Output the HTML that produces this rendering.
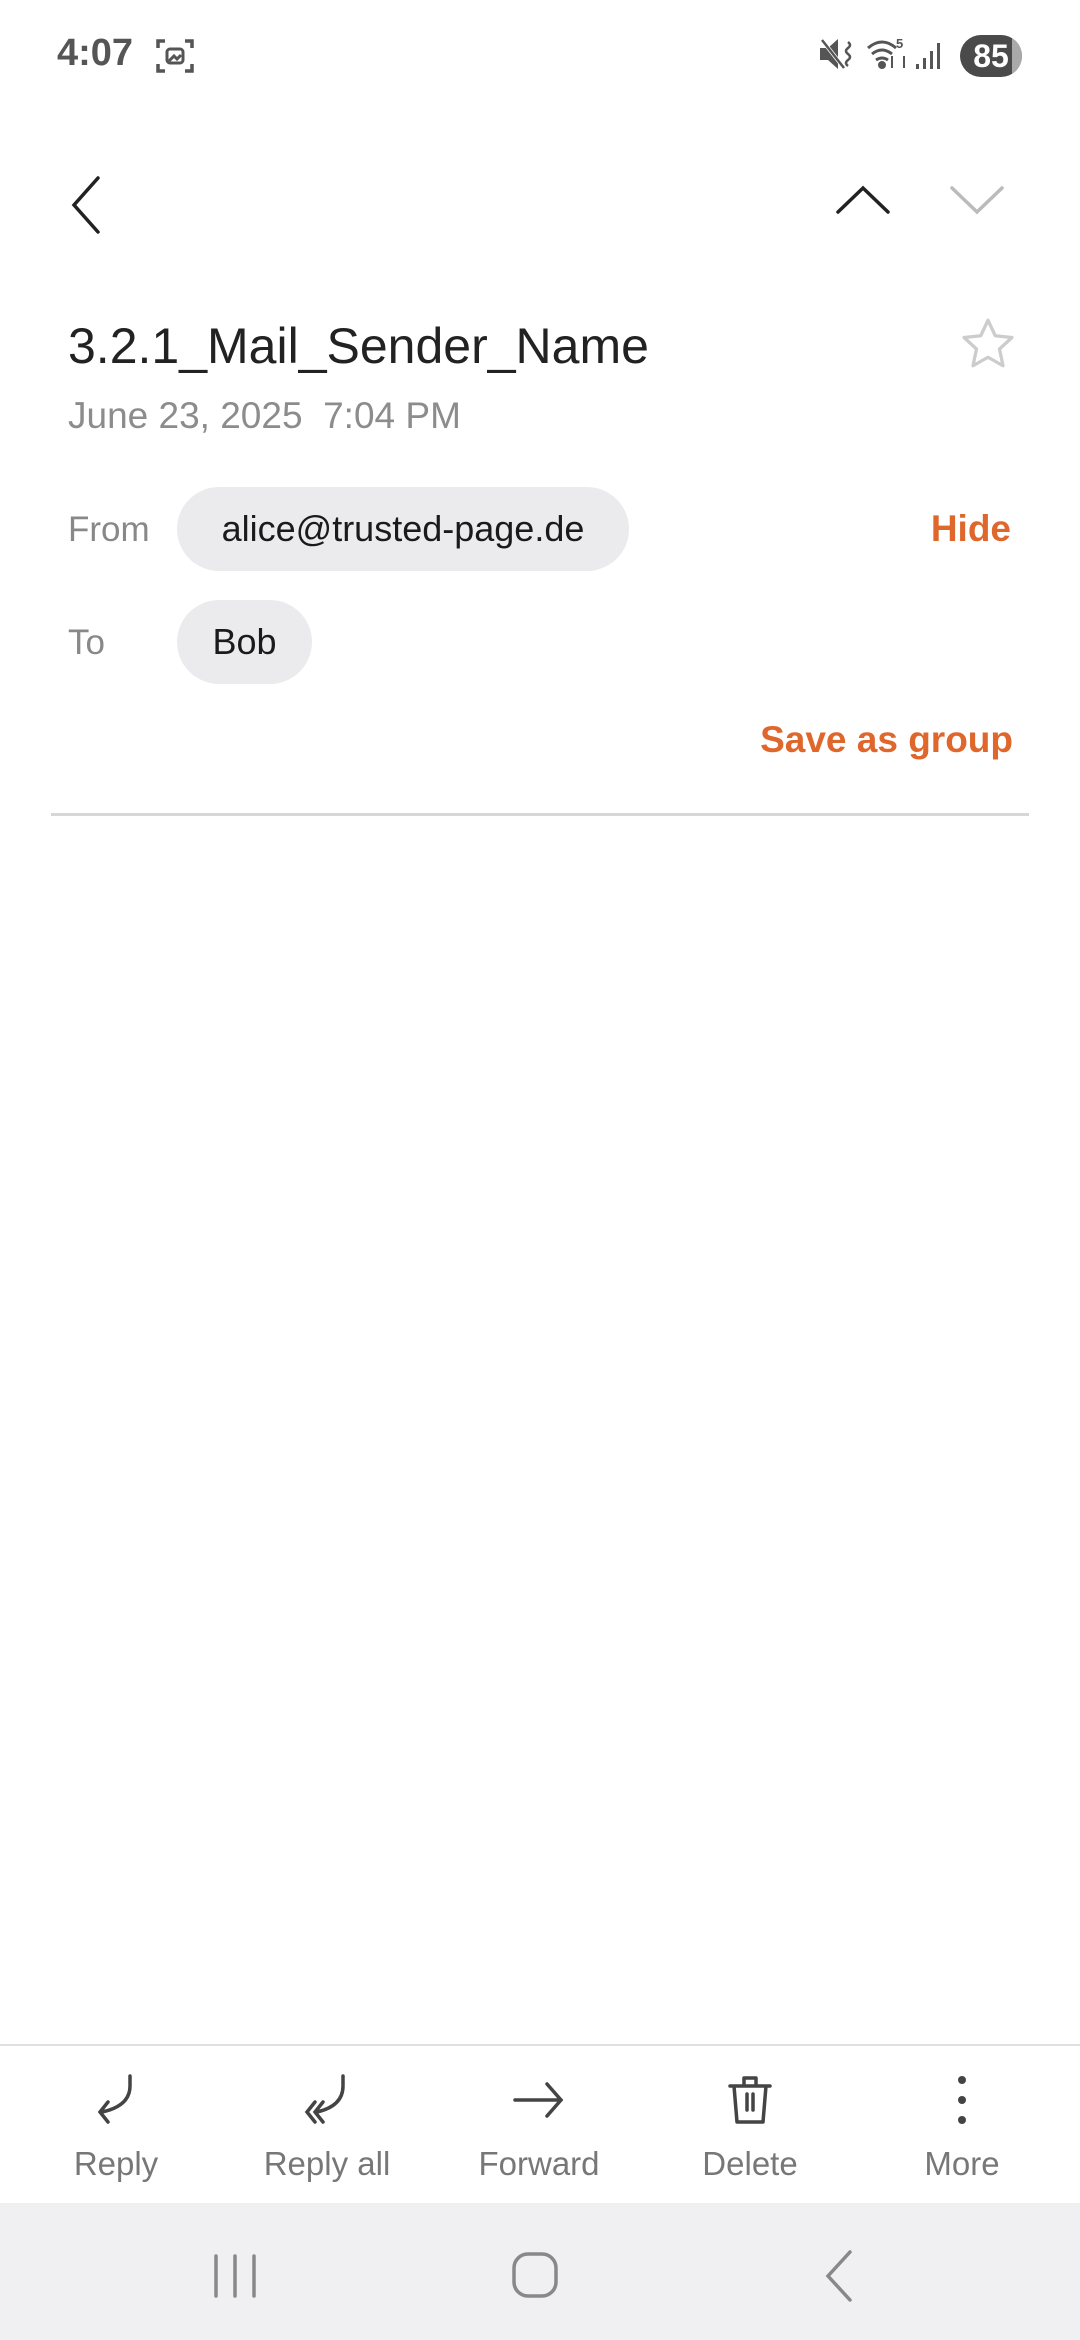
<!DOCTYPE html>
<html><head><meta charset="utf-8"><style>
*{margin:0;padding:0;box-sizing:border-box}
body{width:1080px;height:2340px;background:#fff;font-family:"Liberation Sans",sans-serif;position:relative;overflow:hidden}
.a{position:absolute}
.chip{position:absolute;background:#ebebed;border-radius:42px;height:84px;font-size:36px;color:#1a1a1a;line-height:84px;padding:0 36px}
.lbl{position:absolute;font-size:35px;color:#888}
.tab{position:absolute;top:2072px;width:200px;text-align:center}
.tab span{display:block;margin-top:12px;font-size:33px;color:#777}
</style></head><body>
<div class="a" style="left:57px;top:32px;font-size:38px;font-weight:bold;color:#555">4:07</div>
<svg class="a" style="left:155px;top:37px" width="40" height="38" viewBox="0 0 40 38" fill="none" stroke="#555" stroke-width="3.5"><path d="M3 11V4h7M30 4h7v7M37 27v7h-7M10 34H3v-7"/><rect x="12" y="12" width="16" height="14" rx="3" stroke-width="3"/><path d="M14 24l5-5 3 3 4-4" stroke-width="3"/></svg>
<svg class="a" style="left:818px;top:36px" width="40" height="36" viewBox="0 0 40 36"><path d="M2 12h8l10-9v30l-10-9H2z" fill="#555"/><path d="M4 4l22 28" stroke="#fff" stroke-width="4"/><path d="M4 4l22 28" stroke="#555" stroke-width="2.5"/><path d="M30 6q4 3 0 6q-4 3 0 6q4 3 0 6q-4 3 0 6" stroke="#555" stroke-width="2.5" fill="none"/></svg>
<svg class="a" style="left:866px;top:36px" width="44" height="36" viewBox="0 0 44 36" fill="none" stroke="#555" stroke-width="3"><path d="M2 12q14-12 28 0M6 18q10-8 20 0M10 24q6-4 12 0"/><circle cx="16" cy="29" r="2.5" fill="#555"/><text x="30" y="12" font-size="13" fill="#555" stroke="none" font-weight="bold">5</text><path d="M26 20v12M38 32V20" stroke-width="2"/></svg>
<svg class="a" style="left:914px;top:40px" width="30" height="30" viewBox="0 0 30 30" fill="#555"><rect x="2" y="24" width="3" height="5"/><rect x="9" y="18" width="3" height="11"/><rect x="16" y="11" width="3" height="18"/><rect x="23" y="3" width="3" height="26"/></svg>
<div class="a" style="left:960px;top:35px;width:62px;height:42px;border-radius:21px;background:#4a4a4a;color:#fff;font-weight:bold;font-size:32px;text-align:center;line-height:42px;overflow:hidden"><div class="a" style="right:0;top:0;width:10px;height:42px;background:#aaa"></div>85</div>

<svg class="a" style="left:60px;top:170px" width="50" height="70" viewBox="0 0 50 70" fill="none" stroke="#222" stroke-width="3.5" stroke-linecap="round"><path d="M38 8L14 35l24 27"/></svg>
<svg class="a" style="left:832px;top:180px" width="64" height="40" viewBox="0 0 64 40" fill="none" stroke="#222" stroke-width="3.5" stroke-linecap="round"><path d="M6 32L31 8l25 24"/></svg>
<svg class="a" style="left:946px;top:180px" width="64" height="40" viewBox="0 0 64 40" fill="none" stroke="#bbb" stroke-width="3.5" stroke-linecap="round"><path d="M6 8l25 24 25-24"/></svg>

<div class="a" style="left:68px;top:317px;font-size:50px;color:#222">3.2.1_Mail_Sender_Name</div>
<svg class="a" style="left:958px;top:314px" width="60" height="60" viewBox="0 0 24 24" fill="none" stroke="#ccc" stroke-width="1.3" stroke-linejoin="round"><path d="M12 2.5l2.9 6.2 6.7.7-5 4.6 1.4 6.7L12 17.3 6 20.7l1.4-6.7-5-4.6 6.7-.7z"/></svg>
<div class="a" style="left:68px;top:395px;font-size:37px;color:#8c8c8c">June 23, 2025&nbsp; 7:04 PM</div>

<div class="lbl" style="left:68px;top:510px">From</div>
<div class="chip" style="left:177px;top:487px;width:452px;text-align:center;padding:0">alice@trusted-page.de</div>
<div class="a" style="right:69px;top:508px;font-size:37px;font-weight:bold;color:#e0672c">Hide</div>
<div class="lbl" style="left:68px;top:623px">To</div>
<div class="chip" style="left:177px;top:600px;width:135px;text-align:center;padding:0">Bob</div>
<div class="a" style="right:67px;top:719px;font-size:37px;font-weight:bold;color:#e0672c">Save as group</div>
<div class="a" style="left:51px;top:813px;width:978px;height:3px;background:#d6d6d6"></div>

<div class="a" style="left:0;top:2044px;width:1080px;height:2px;background:#e0e0e0"></div>
<div class="tab" style="left:16px"><svg width="56" height="56" viewBox="0 0 56 56" fill="none" stroke="#444" stroke-width="3.5" stroke-linecap="round"><path d="M42 4v10q0 20-28 26M20 30l-8 10 8 10"/></svg><span>Reply</span></div>
<div class="tab" style="left:227px"><svg width="56" height="56" viewBox="0 0 56 56" fill="none" stroke="#444" stroke-width="3.5" stroke-linecap="round"><path d="M44 4v10q0 20-26 26M24 30l-8 10 8 10M16 30l-8 10 8 10"/></svg><span>Reply all</span></div>
<div class="tab" style="left:439px"><svg width="56" height="56" viewBox="0 0 56 56" fill="none" stroke="#444" stroke-width="3.5" stroke-linecap="round"><path d="M4 28h46M36 12l14 16-14 16"/></svg><span>Forward</span></div>
<div class="tab" style="left:650px"><svg width="56" height="56" viewBox="0 0 56 56" fill="none" stroke="#444" stroke-width="3.5" stroke-linecap="round" stroke-linejoin="round"><path d="M8 14h40M22 14V6h12v8M12 14l3 36h26l3-36M25 22v16M31 22v16"/></svg><span>Delete</span></div>
<div class="tab" style="left:862px"><svg width="56" height="56" viewBox="0 0 56 56" fill="#444"><circle cx="28" cy="8" r="4"/><circle cx="28" cy="28" r="4"/><circle cx="28" cy="48" r="4"/></svg><span>More</span></div>

<div class="a" style="left:0;top:2203px;width:1080px;height:137px;background:#f0f0f2"></div>
<svg class="a" style="left:210px;top:2250px" width="50" height="50" viewBox="0 0 50 50" stroke="#888" stroke-width="3.5" stroke-linecap="round"><path d="M6 6v40M25 6v40M44 6v40"/></svg>
<svg class="a" style="left:510px;top:2250px" width="50" height="50" viewBox="0 0 50 50" fill="none" stroke="#888" stroke-width="3.5"><rect x="4" y="4" width="42" height="42" rx="14"/></svg>
<svg class="a" style="left:818px;top:2248px" width="44" height="56" viewBox="0 0 44 56" fill="none" stroke="#888" stroke-width="3.5" stroke-linecap="round"><path d="M32 4L10 28l22 24"/></svg>
</body></html>
